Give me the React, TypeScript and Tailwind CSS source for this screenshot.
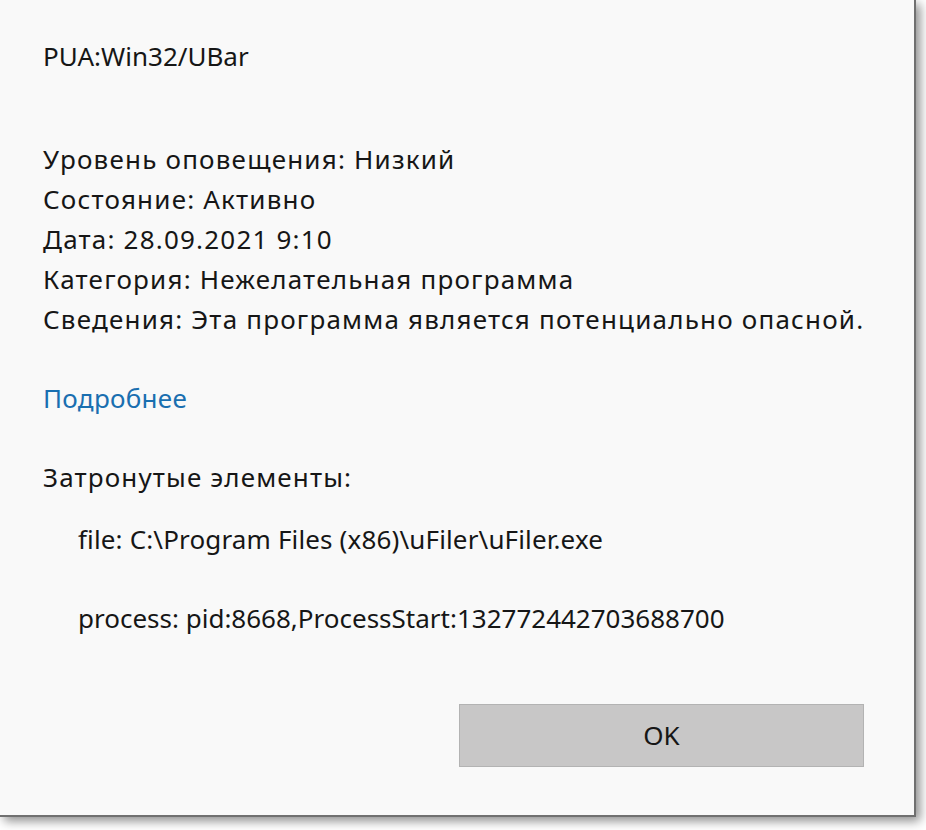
import React from 'react';

const lines = [
  'Уровень оповещения: Низкий',
  'Состояние: Активно',
  'Дата: 28.09.2021 9:10',
  'Категория: Нежелательная программа',
  'Сведения: Эта программа является потенциально опасной.',
];

export default function App() {
  return (
    <div className="w-[926px] h-[830px] bg-white overflow-hidden" style={{ fontFamily: '"Noto Sans", "Open Sans", sans-serif' }}>
      <div className="w-[916px] h-[817px] bg-[#f9f9f9] border-r-2 border-b-2 border-[#707070] shadow-[4px_4px_10px_rgba(0,0,0,0.45)] flex flex-col pl-[43px] text-[#161616] text-[26px]">
        <div className="h-[40px] mt-[36px] flex items-center">PUA:Win32/UBar</div>
        <div className="mt-[63px] flex flex-col tracking-[1.2px]">
          {lines.map((l) => (
            <div key={l} className="h-[40px] flex items-center">{l}</div>
          ))}
        </div>
        <div className="mt-[39px] h-[40px] flex items-center tracking-[0.3px] text-[#1a6fb0]">Подробнее</div>
        <div className="mt-[39px] h-[40px] flex items-center tracking-[1.15px]">Затронутые элементы:</div>
        <div className="mt-[22px] pl-[35px] h-[40px] flex items-center tracking-[0.15px]">file: C:\Program Files (x86)\uFiler\uFiler.exe</div>
        <div className="mt-[39px] pl-[35px] h-[40px] flex items-center">process: pid:8668,ProcessStart:132772442703688700</div>
        <div className="flex-1" />
        <div className="flex justify-end pr-[50px] mb-[48px]">
          <button className="w-[405px] h-[63px] bg-[#c8c7c7] border border-[#b3b3b3] text-[26px] text-[#161616] flex items-center justify-center">OK</button>
        </div>
      </div>
    </div>
  );
}
